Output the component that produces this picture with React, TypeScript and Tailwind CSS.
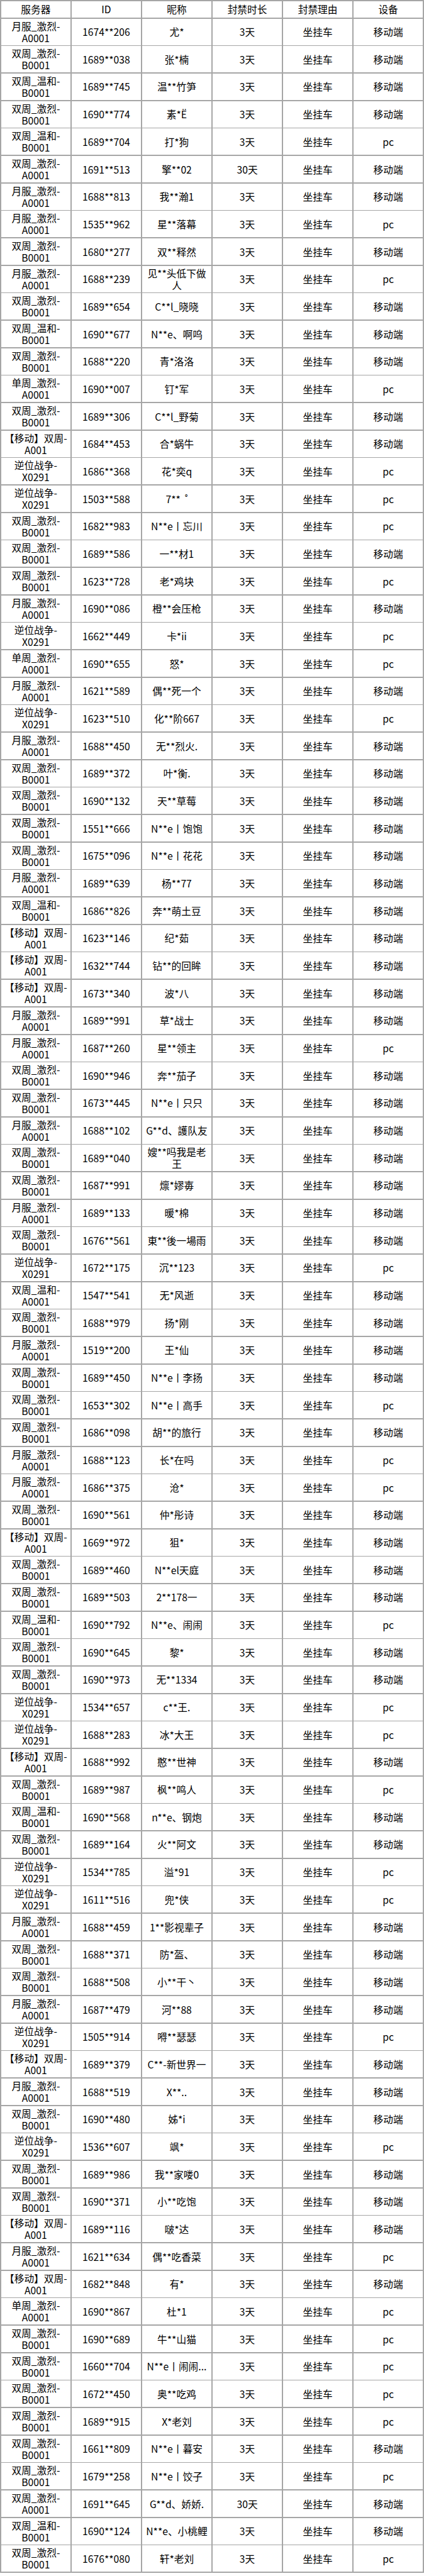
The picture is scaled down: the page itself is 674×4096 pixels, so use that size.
import React from "react";

const SERVERS: Record<string, string> = {
  a: "月服_激烈-A0001",
  b: "双周_激烈-B0001",
  c: "双周_温和-B0001",
  d: "双周_激烈-A0001",
  e: "单周_激烈-A0001",
  f: "【移动】双周-A001",
  g: "逆位战争-X0291",
  h: "双周_温和-A0001",
};

const RAW = `a|1674**206|尤*|3|m
b|1689**038|张*楠|3|m
c|1689**745|温**竹笋|3|m
b|1690**774|素*Ë|3|m
c|1689**704|打*狗|3|p
d|1691**513|擎**02|30|m
a|1688**813|我**瀚1|3|m
a|1535**962|星**落幕|3|p
b|1680**277|双**释然|3|m
a|1688**239|见**头低下做~人|3|p
b|1689**654|C**l_晓晓|3|m
c|1690**677|N**e、啊呜|3|m
b|1688**220|青*洛洛|3|m
e|1690**007|钉*军|3|p
b|1689**306|C**l_野菊|3|m
f|1684**453|合*蜗牛|3|m
g|1686**368|花*奕q|3|p
g|1503**588|7**  ˚|3|p
b|1682**983|N**e丨忘川|3|p
b|1689**586|一**材1|3|m
b|1623**728|老*鸡块|3|p
a|1690**086|橙**会压枪|3|m
g|1662**449|卡*ii|3|p
e|1690**655|怒*|3|p
a|1621**589|偶**死一个|3|m
g|1623**510|化**阶667|3|p
a|1688**450|无**烈火.|3|m
b|1689**372|叶*衡.|3|m
b|1690**132|天**草莓|3|m
b|1551**666|N**e丨饱饱|3|m
b|1675**096|N**e丨花花|3|m
a|1689**639|杨**77|3|m
c|1686**826|奔**萌土豆|3|m
f|1623**146|纪*茹|3|m
f|1632**744|钻**的回眸|3|m
f|1673**340|波*八|3|m
a|1689**991|草*战士|3|m
a|1687**260|星**领主|3|p
b|1690**946|奔**茄子|3|m
b|1673**445|N**e丨只只|3|m
a|1688**102|G**d、護队友|3|m
b|1689**040|嫂**吗我是老~王|3|m
b|1687**991|燷*嫪毐|3|m
a|1689**133|暖*棉|3|m
b|1676**561|東**後一場雨|3|m
g|1672**175|沉**123|3|p
h|1547**541|无*风逝|3|m
b|1688**979|扬*刚|3|m
a|1519**200|王*仙|3|m
b|1689**450|N**e丨李扬|3|m
b|1653**302|N**e丨高手|3|p
b|1686**098|胡**的旅行|3|m
a|1688**123|长*在吗|3|p
a|1686**375|沧*|3|p
b|1690**561|仲*彤诗|3|m
f|1669**972|狙*|3|m
b|1689**460|N**el天庭|3|m
b|1689**503|2**178一|3|m
c|1690**792|N**e、闹闹|3|p
b|1690**645|黎*|3|m
b|1690**973|无**1334|3|m
g|1534**657|c**王.|3|p
g|1688**283|冰*大王|3|p
f|1688**992|憨**世神|3|m
b|1689**987|枫**鸣人|3|p
c|1690**568|n**e、钢炮|3|m
b|1689**164|火**阿文|3|m
g|1534**785|溢*91|3|p
g|1611**516|兜*侠|3|p
a|1688**459|1**影视辈子|3|m
b|1688**371|防*盔、|3|m
b|1688**508|小**干丶|3|m
a|1687**479|河**88|3|m
g|1505**914|嘚**瑟瑟|3|p
f|1689**379|C**-新世界一|3|m
a|1688**519|X**..|3|m
b|1690**480|姊*i|3|m
g|1536**607|飒*|3|p
b|1689**986|我**家喽0|3|m
b|1690**371|小**吃饱|3|m
f|1689**116|啵*达|3|m
a|1621**634|偶**吃香菜|3|p
f|1682**848|有*|3|m
e|1690**867|杜*1|3|p
b|1690**689|牛**山猫|3|p
b|1660**704|N**e丨闹闹...|3|p
b|1672**450|奥**吃鸡|3|p
b|1689**915|X*老刘|3|p
b|1661**809|N**e丨暮安|3|m
b|1679**258|N**e丨饺子|3|p
d|1691**645|G**d、娇娇.|30|m
c|1690**124|N**e、小桃鲤|3|m
b|1676**080|轩*老刘|3|p`;

type Row = string[];

const ROWS: Row[] = RAW.split("\n").map((line) => {
  const [s, id, nick, dur, dev] = line.split("|");
  const server = SERVERS[s];
  const i = server.lastIndexOf("-");
  return [
    server.slice(0, i + 1) + "\n" + server.slice(i + 1),
    id,
    nick.replace("~", "\n"),
    dur + "天",
    "坐挂车",
    dev === "m" ? "移动端" : "pc",
  ];
});

const HEADERS = ["服务器", "ID", "昵称", "封禁时长", "封禁理由", "设备"];

export default function App() {
  return (
    <div className="w-[674px] bg-white">
      <div className="grid grid-cols-6 gap-[1.68px] p-[1.68px] bg-[#a6a6a6] font-['Noto_Sans_CJK_SC','Noto_Sans',sans-serif] text-[15.7px] leading-[19px] text-black">
        {HEADERS.map((h) => (
          <div
            key={h}
            className="h-[26.3px] bg-white flex items-center justify-center text-center whitespace-pre"
          >
            {h}
          </div>
        ))}
        {ROWS.map((r, ri) =>
          r.map((c, ci) => (
            <div
              key={ri + "-" + ci}
              className="h-[42px] bg-white flex items-center justify-center text-center whitespace-pre"
            >
              {c}
            </div>
          ))
        )}
      </div>
    </div>
  );
}
